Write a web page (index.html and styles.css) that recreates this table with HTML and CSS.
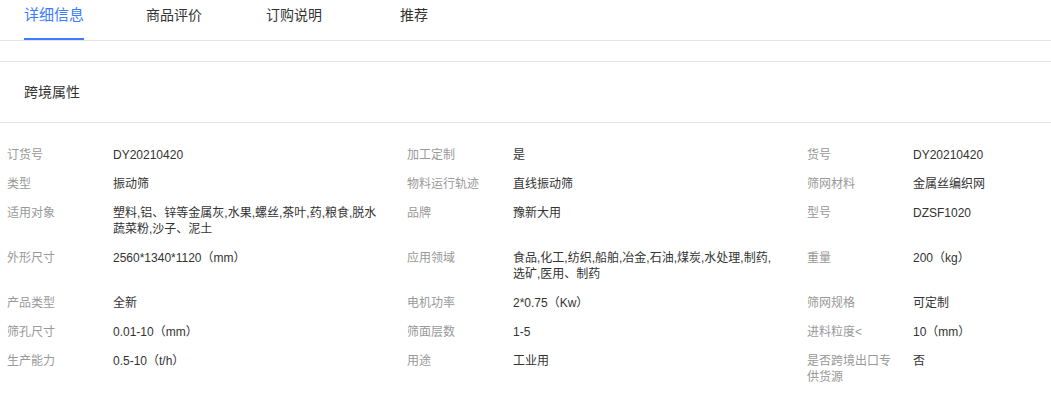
FILE: index.html
```html
<!DOCTYPE html>
<html lang="zh">
<head>
<meta charset="utf-8">
<link rel="stylesheet" href="styles.css">
</head>
<body>
<nav class="tabs">
  <div class="tab active"><span>详细信息</span></div>
  <div class="tab"><span>商品评价</span></div>
  <div class="tab"><span>订购说明</span></div>
  <div class="tab"><span>推荐</span></div>
</nav>
<div class="spacer"></div>
<div class="section-title">跨境属性</div>
<div class="attrs">
  <div class="row">
    <div class="cell"><div class="label">订货号</div><div class="value">DY20210420</div></div>
    <div class="cell"><div class="label">加工定制</div><div class="value">是</div></div>
    <div class="cell"><div class="label">货号</div><div class="value">DY20210420</div></div>
  </div>
  <div class="row">
    <div class="cell"><div class="label">类型</div><div class="value">振动筛</div></div>
    <div class="cell"><div class="label">物料运行轨迹</div><div class="value">直线振动筛</div></div>
    <div class="cell"><div class="label">筛网材料</div><div class="value">金属丝编织网</div></div>
  </div>
  <div class="row">
    <div class="cell"><div class="label">适用对象</div><div class="value">塑料,铝、锌等金属灰,水果,螺丝,茶叶,药,粮食,脱水蔬菜粉,沙子、泥土</div></div>
    <div class="cell"><div class="label">品牌</div><div class="value">豫新大用</div></div>
    <div class="cell"><div class="label">型号</div><div class="value">DZSF1020</div></div>
  </div>
  <div class="row">
    <div class="cell"><div class="label">外形尺寸</div><div class="value">2560*1340*1120（mm）</div></div>
    <div class="cell"><div class="label">应用领域</div><div class="value">食品,化工,纺织,船舶,冶金,石油,煤炭,水处理,制药,选矿,医用、制药</div></div>
    <div class="cell"><div class="label">重量</div><div class="value">200（kg）</div></div>
  </div>
  <div class="row">
    <div class="cell"><div class="label">产品类型</div><div class="value">全新</div></div>
    <div class="cell"><div class="label">电机功率</div><div class="value">2*0.75（Kw）</div></div>
    <div class="cell"><div class="label">筛网规格</div><div class="value">可定制</div></div>
  </div>
  <div class="row">
    <div class="cell"><div class="label">筛孔尺寸</div><div class="value">0.01-10（mm）</div></div>
    <div class="cell"><div class="label">筛面层数</div><div class="value">1-5</div></div>
    <div class="cell"><div class="label">进料粒度&lt;</div><div class="value">10（mm）</div></div>
  </div>
  <div class="row">
    <div class="cell"><div class="label">生产能力</div><div class="value">0.5-10（t/h）</div></div>
    <div class="cell"><div class="label">用途</div><div class="value">工业用</div></div>
    <div class="cell"><div class="label">是否跨境出口专供货源</div><div class="value">否</div></div>
  </div>
</div>
</body>
</html>
```

FILE: styles.css
```css
html, body {
  margin: 0;
  padding: 0;
  background: #fff;
}
body {
  font-family: "Liberation Sans", "Noto Sans CJK SC", sans-serif;
  color: #333;
}
.tabs {
  display: flex;
  margin-left: -6px;
  height: 40px;
  border-bottom: 1px solid #e5e5e5;
}
.tab {
  width: 120px;
  display: flex;
  justify-content: center;
  font-size: 14px;
  color: #333;
}
.tab span {
  display: block;
  box-sizing: border-box;
  height: 40px;
  padding-top: 5px;
  line-height: 20px;
}
.tab.active {
  font-size: 15px;
  color: #3d7bff;
}
.tab.active span {
  border-bottom: 2px solid #3d7bff;
}
.spacer {
  height: 20px;
  border-bottom: 1px solid #e5e5e5;
}
.section-title {
  height: 60px;
  line-height: 60px;
  padding-left: 24px;
  font-size: 14px;
  color: #333;
  border-bottom: 1px solid #e5e5e5;
}
.attrs {
  margin-top: 18px;
  padding-left: 7px;
  font-size: 12px;
  line-height: 16px;
}
.row {
  display: grid;
  grid-template-columns: 400px 400px 1fr;
}
.cell {
  display: flex;
  min-width: 0;
  padding: 6px 0 7px;
}
.label {
  width: 90px;
  margin-right: 16px;
  color: #999;
  flex: none;
}
.value {
  width: 266px;
  min-width: 0;
  color: #333;
}
```
